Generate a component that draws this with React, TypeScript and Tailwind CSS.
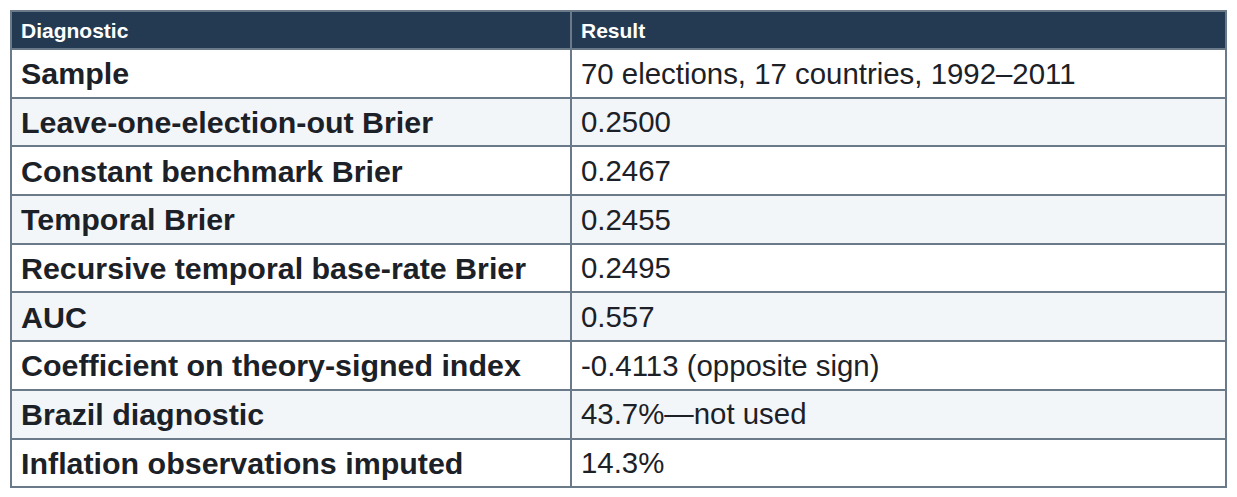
import React from 'react';

const rows: [string, string][] = [
  ['Sample', '70 elections, 17 countries, 1992–2011'],
  ['Leave-one-election-out Brier', '0.2500'],
  ['Constant benchmark Brier', '0.2467'],
  ['Temporal Brier', '0.2455'],
  ['Recursive temporal base-rate Brier', '0.2495'],
  ['AUC', '0.557'],
  ['Coefficient on theory-signed index', '-0.4113 (opposite sign)'],
  ['Brazil diagnostic', '43.7%—not used'],
  ['Inflation observations imputed', '14.3%'],
];

const App: React.FC = () => {
  return (
    <div className="min-h-screen bg-white pt-[10px] pl-[10px]" style={{ fontFamily: '"Liberation Sans", Arial, sans-serif' }}>
      <table className="w-[1217px] border-collapse border-2 border-[#6b7a89] text-[#1c2127]">
        <thead>
          <tr className="h-[38px] bg-[#243a52] text-white">
            <th className="w-[560px] border-2 border-[#6b7a89] px-[9px] text-left text-[21px] font-bold leading-none">Diagnostic</th>
            <th className="border-2 border-[#6b7a89] px-[9px] text-left text-[21px] font-bold leading-none">Result</th>
          </tr>
        </thead>
        <tbody>
          {rows.map(([label, value], index) => (
            <tr key={label} className={`h-[48.7px] ${index % 2 === 1 ? 'bg-[#f3f6f9]' : 'bg-white'}`}>
              <td className="border-2 border-[#6b7a89] px-[9px] text-[30.4px] font-bold leading-none">{label}</td>
              <td className="border-2 border-[#6b7a89] px-[9px] text-[29.4px] leading-none">{value}</td>
            </tr>
          ))}
        </tbody>
      </table>
    </div>
  );
};

export default App;
